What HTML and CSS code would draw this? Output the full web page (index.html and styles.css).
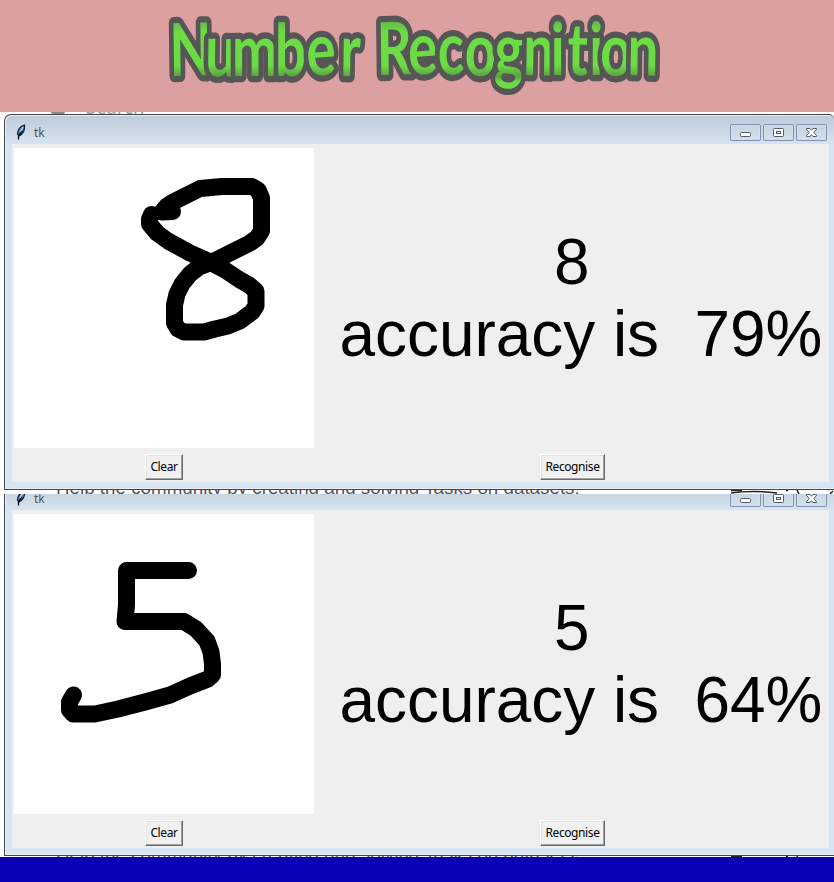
FILE: index.html
```html
<!DOCTYPE html>
<html lang="en">
<head>
<meta charset="utf-8">
<title>Number Recognition</title>
<link rel="stylesheet" href="styles.css">
</head>
<body>
<svg class="defs" width="0" height="0" aria-hidden="true">
  <defs>
    <symbol id="feather" viewBox="0 0 10 16">
      <path d="M8.500 1C5 2 2 5 1.500 10L3 12C7 10 9 6 8.500 1Z" fill="#4d87cf" stroke="#111b2c" stroke-width="1.200"/>
      <path d="M7 3L4 8" stroke="#b8d7f5" stroke-width="1.300"/>
      <path d="M6 7L2.500 12V15.500" fill="none" stroke="#000" stroke-width="1.300"/>
    </symbol>
    <symbol id="min" viewBox="0 0 31 17">
      <rect x="10.500" y="8.500" width="10" height="4" rx="1" fill="#fff" stroke="#555b6b"/>
    </symbol>
    <symbol id="max" viewBox="0 0 31 17">
      <rect x="10.500" y="4.500" width="10" height="8" rx="1" fill="#fff" stroke="#555b6b"/>
      <rect x="13.500" y="7.500" width="4" height="2" fill="#d7e4f1" stroke="#555b6b"/>
    </symbol>
    <symbol id="close" viewBox="0 0 31 17">
      <path d="M10.500 4.500H14L15.500 6.300L17 4.500H20.500V5.500L17.700 8.500L20.500 11.500V12.500H17L15.500 10.700L14 12.500H10.500V11.500L13.300 8.500L10.500 5.500Z" fill="#fff" stroke="#555b6b"/>
    </symbol>
  </defs>
</svg>

<header class="banner">
  <svg class="logo" width="834" height="112" viewBox="0 0 834 112">
    <defs>
      <linearGradient id="paint" gradientUnits="userSpaceOnUse" x1="0" y1="18" x2="0" y2="94">
        <stop offset="0" stop-color="#5fac48"/>
        <stop offset=".18" stop-color="#6cdc45"/>
        <stop offset=".62" stop-color="#6cdc45"/>
        <stop offset=".77" stop-color="#5ca141"/>
        <stop offset=".84" stop-color="#6cdc45"/>
        <stop offset="1" stop-color="#6cdc45"/>
      </linearGradient>
    </defs>
    <g class="word" transform="scale(.75 1)">
      <text y="76" rotate="-1 1 0 0 -3 1" x="254.500 294 340 387.500 429 467">Number</text>
      <text y="75" rotate="-1 -3 -2 2 2 1 0 1 0 2 1" x="526 565 602 640 678 718 743.500 770 795 820.500 857">Recognition</text>
    </g>
  </svg>
</header>

<section class="shot shot-first">
  <div class="behind behind-top"><i class="smudge"></i><span>Search</span></div>
  <div class="window">
    <div class="titlebar">
      <svg class="feather" width="10" height="16"><use href="#feather"/></svg>
      <span class="caption">tk</span>
      <span class="control"><svg width="31" height="17"><use href="#min"/></svg></span>
      <span class="control"><svg width="31" height="17"><use href="#max"/></svg></span>
      <span class="control"><svg width="31" height="17"><use href="#close"/></svg></span>
    </div>
    <div class="client">
      <svg class="canvas" width="300" height="300" viewBox="14 148 300 300">
        <path d="M172.500 211.500L162 212L167 206L173 202L185 196L200 188.500L222 186.500H252L258 190L261.500 198V231L257 238L250 243L232 252L212 262L199 267L190 274L182 284L177 294L174.500 305V323L178 329L184 332H204L215 329L228 326L240 321L252 312L256 306V291L249 285L240 280L225 270L208 261L190 253L168 241L157 233L149.500 224V219L151.500 214.500"/>
      </svg>
      <div class="result">8<br>accuracy is &nbsp;79%</div>
      <button class="btn">Clear</button>
      <button class="btn">Recognise</button>
    </div>
  </div>
  <div class="behind behind-bottom">
    <span>Help the community by creating and solving Tasks on datasets!</span>
    <svg class="scrawl" width="104" height="4" viewBox="730 490 104 4"><path d="M731 490.500H742M731 493Q753 490 777 493M786 490.500H788M797 490L799 494M833 491L830 494"/></svg>
  </div>
</section>

<section class="shot shot-second">
  <div class="window">
    <div class="titlebar">
      <svg class="feather" width="10" height="16"><use href="#feather"/></svg>
      <span class="caption">tk</span>
      <span class="control"><svg width="31" height="17"><use href="#min"/></svg></span>
      <span class="control"><svg width="31" height="17"><use href="#max"/></svg></span>
      <span class="control"><svg width="31" height="17"><use href="#close"/></svg></span>
    </div>
    <div class="client">
      <svg class="canvas" width="300" height="300" viewBox="14 514 300 300">
        <path d="M188.500 570.500H126.500V605L125 621.500H184L196 629L207 641L211 652L212.500 664V675L208 679L190 686L170 695L145 702L118 709L95 714H73L69.500 710V702L73.500 695"/>
      </svg>
      <div class="result">5<br>accuracy is &nbsp;64%</div>
      <button class="btn">Clear</button>
      <button class="btn">Recognise</button>
    </div>
  </div>
  <div class="behind behind-bottom">
    <span>Help the community by creating and solving Tasks on datasets!</span>
    <svg class="scrawl" width="104" height="4" viewBox="730 490 104 4"><path d="M731 490.500H742M786 490.500H788M797 490L799 494"/></svg>
  </div>
</section>

<footer class="footer"></footer>
</body>
</html>
```
FILE: styles.css
```css
* {
  box-sizing: border-box;
}

body {
  margin: 0;
  width: 834px;
  background: #fff;
  font-family: "Noto Sans", "Open Sans", sans-serif;
  overflow: hidden;
}

.defs {
  display: none;
}

svg {
  display: block;
}

.banner {
  height: 112px;
  background: #dda0a0;
}

.word text {
  font: 700 73px Lato, sans-serif;
  text-anchor: middle;
  fill: url(#paint);
  stroke: #565656;
  stroke-width: 12.500px;
  stroke-linejoin: round;
  paint-order: stroke;
}

.shot {
  display: flex;
  flex-direction: column;
  overflow: hidden;
}

.shot-first {
  height: 382px;
}

.shot-second {
  height: 363px;
}

.shot-second .window {
  margin-top: -14px;
}

.behind {
  display: flex;
  flex: none;
  overflow: hidden;
  color: #555;
  white-space: nowrap;
}

.behind-top {
  height: 2px;
  padding-left: 51px;
  font-size: 18.500px;
  line-height: 24px;
  color: #999;
}

.behind-top span {
  margin: -17px 0 0 21px;
}

.smudge {
  width: 14px;
  height: 5px;
  margin-top: -2px;
  border-radius: 50%;
  background: #888;
}

.behind-bottom {
  height: 4px;
  justify-content: space-between;
  padding-left: 56px;
  font: 18.800px/22px "Liberation Sans", sans-serif;
}

.behind-bottom span {
  margin-top: -13px;
}

.scrawl {
  fill: none;
  stroke: #222;
  stroke-width: 1.500;
}

.window {
  flex: none;
  height: 376px;
  margin-left: 4px;
  padding: 0 5px 7px 7px;
  border: 1px solid #454545;
  border-right: 0;
  border-radius: 7px 5px 0 0;
  background: linear-gradient(#bccad9, #d7e4f1 29px);
  box-shadow: inset 1px 1px #e9f0f7, inset 0 -1px #e9f0f7;
}

.titlebar {
  display: flex;
  height: 29px;
  padding: 9px 2px 0 4px;
  gap: 2px;
}

.feather {
  flex: none;
}

.caption {
  flex: 1;
  padding-left: 6px;
  font-size: 12px;
  line-height: 18px;
  color: #555;
}

.control {
  flex: none;
  width: 31px;
  height: 17px;
  border-radius: 2px;
  box-shadow: inset 0 0 0 1px #8190b0, inset 0 0 0 2px #d3dfeb;
}

.client {
  display: grid;
  grid-template-columns: 300px 517px;
  grid-template-rows: 300px 26px;
  row-gap: 6px;
  height: 338px;
  padding: 4px 0 0 2px;
  overflow: hidden;
  background: #efefef;
}

.canvas {
  background: #fff;
}

.canvas path {
  fill: none;
  stroke: #000;
  stroke-width: 17px;
  stroke-linecap: round;
  stroke-linejoin: round;
}

.result {
  align-self: center;
  margin-left: 25.500px;
  font: 63.900px/72px "Liberation Sans", Arial, sans-serif;
  color: #000;
  text-indent: 214.500px;
  white-space: nowrap;
}

.btn {
  justify-self: center;
  width: 38px;
  height: 26px;
  padding: 0;
  border: 1px solid;
  border-color: #fff #696969 #696969 #fff;
  box-shadow: inset -1px -1px #a0a0a0, inset 1px 1px #e3e3e3;
  background: #f0f0f0;
  font: 12px/22px "Noto Sans", "Open Sans", sans-serif;
  color: #000;
  letter-spacing: -.4px;
  white-space: nowrap;
}

.btn + .btn {
  width: 65px;
}

.footer {
  height: 25px;
  background: #0a00b8;
}
```
